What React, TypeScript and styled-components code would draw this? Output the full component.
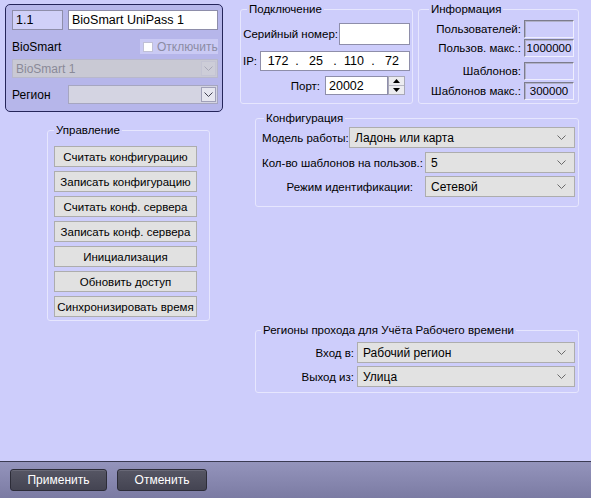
import React from 'react';
import styled, { createGlobalStyle } from 'styled-components';

const FS = 11.5;

const Global = createGlobalStyle`
  html, body { margin: 0; padding: 0; }
  body {
    font-family: "Liberation Sans", Arial, sans-serif;
    font-size: ${FS}px;
    color: #000;
  }
`;

const Window = styled.div`
  width: 591px;
  height: 498px;
  display: flex;
  flex-direction: column;
  background: #cdcdfb;
  overflow: hidden;
`;

const Main = styled.div`
  height: 461px;
  display: flex;
  flex-direction: column;
`;

const TopRow = styled.div`
  display: flex;
  align-items: flex-start;
  height: 112px;
`;

const DevicePanel = styled.div`
  margin: 4px 0 0 5px;
  width: 218px;
  height: 108px;
  box-sizing: border-box;
  border: 1px solid #25255a;
  border-radius: 5px;
  background: #b6b6ea;
  padding: 5px 4px 0 6px;
  display: flex;
  flex-direction: column;
`;

const PanelRow = styled.div<{ $mt: number; $h: number }>`
  margin-top: ${p => p.$mt}px;
  height: ${p => p.$h}px;
  display: flex;
  align-items: center;
`;

const Spacer = styled.span<{ $w: number }>`
  width: ${p => p.$w}px;
  flex: none;
`;

const TextInput = styled.div<{ $w?: number; $bg?: string }>`
  ${p => (p.$w ? `width: ${p.$w}px;` : 'flex: 1;')}
  height: 100%;
  box-sizing: border-box;
  border: 1px solid #8e8eaa;
  background: ${p => p.$bg ?? '#fff'};
  display: flex;
  align-items: center;
  padding: 0 3px;
  font-size: 12.5px;
  white-space: nowrap;
`;

const PanelLabel = styled.span<{ $w?: number }>`
  ${p => (p.$w ? `width: ${p.$w}px;` : 'flex: 1;')}
  font-size: 12px;
  color: #000;
`;

const DisableBox = styled.label`
  width: 78px;
  height: 15px;
  background: #cacaf4;
  display: flex;
  align-items: center;
  gap: 4px;
  padding-left: 3px;
  box-sizing: border-box;
  color: #8c8ca4;
  font-size: 12px;
`;

const CheckSquare = styled.span`
  width: 10px;
  height: 10px;
  background: #fff;
  border: 1px solid #c0c0d6;
  box-sizing: border-box;
`;

const PanelSelect = styled.div<{ $disabled?: boolean }>`
  flex: 1;
  height: 100%;
  box-sizing: border-box;
  border: 1px solid ${p => (p.$disabled ? '#b8b8cc' : '#a6a6c0')};
  background: ${p => (p.$disabled ? '#c9c9d4' : '#d4d4e2')};
  color: ${p => (p.$disabled ? '#8a8a98' : '#000')};
  display: flex;
  align-items: center;
  padding-left: 3px;
  font-size: 12px;
`;

const SelectText = styled.span`
  flex: 1;
  white-space: nowrap;
`;

const ArrowBox = styled.span<{ $disabled?: boolean }>`
  width: 15px;
  height: 15px;
  margin-right: 1px;
  box-sizing: border-box;
  border: 1px solid ${p => (p.$disabled ? '#c4c4d4' : '#a0a0b8')};
  background: ${p => (p.$disabled ? '#cdcdd8' : '#e6e6ef')};
  display: flex;
  align-items: center;
  justify-content: center;
  color: ${p => (p.$disabled ? '#a8a8b8' : '#404050')};
`;

const Group = styled.fieldset<{ $w: number; $ml?: number; $mt?: number }>`
  margin: ${p => p.$mt ?? 0}px 0 0 ${p => p.$ml ?? 0}px;
  width: ${p => p.$w}px;
  box-sizing: border-box;
  border: 1px solid #e6e6fe;
  border-radius: 3px;
  padding: 0;
  min-width: 0;
`;

const Legend = styled.legend<{ $ml?: number }>`
  margin-left: ${p => p.$ml ?? 6}px;
  padding: 0 2px;
  line-height: 13px;
  font-size: ${FS}px;
`;

const GroupBody = styled.div<{ $pad: string }>`
  display: flex;
  flex-direction: column;
  padding: ${p => p.$pad};
`;

const FormRow = styled.div<{ $mt?: number; $h: number; $end?: boolean }>`
  margin-top: ${p => p.$mt ?? 0}px;
  height: ${p => p.$h}px;
  display: flex;
  align-items: center;
  justify-content: ${p => (p.$end ? 'flex-end' : 'flex-start')};
`;

const Label = styled.span<{ $mr?: number; $grow?: boolean; $right?: boolean }>`
  margin-right: ${p => p.$mr ?? 0}px;
  white-space: nowrap;
  ${p => (p.$grow ? 'flex: 1;' : '')}
  text-align: ${p => (p.$right ? 'right' : 'left')};
`;

const IpBox = styled.div`
  flex: 1;
  margin-left: 3px;
  height: 100%;
  box-sizing: border-box;
  border: 1px solid #8e8eaa;
  background: #fff;
  display: flex;
  align-items: center;
  font-size: 12.5px;
`;

const Octet = styled.span`
  flex: 1;
  text-align: center;
`;

const Dot = styled.span`
  width: 4px;
  text-align: center;
`;

const Spin = styled.div`
  width: 17px;
  height: 100%;
  box-sizing: border-box;
  border: 1px solid #a8a8b8;
  background: #ececf0;
  display: flex;
  flex-direction: column;
  margin-right: 5px;
`;

const SpinHalf = styled.span<{ $top?: boolean }>`
  flex: 1;
  display: flex;
  align-items: center;
  justify-content: center;
  ${p => (p.$top ? 'border-bottom: 1px solid #b8b8c4;' : '')}
`;

const InfoField = styled.div`
  width: 50px;
  height: 100%;
  box-sizing: border-box;
  border-top: 1px solid #7c7c8c;
  border-left: 1px solid #7c7c8c;
  border-right: 1px solid #eeeefe;
  border-bottom: 1px solid #eeeefe;
  box-shadow: inset 1px 1px 0 #b0b0c8;
  background: #cdcdfb;
  display: flex;
  align-items: center;
  justify-content: center;
  font-size: ${FS}px;
`;

const BottomRow = styled.div`
  display: flex;
  align-items: flex-start;
`;

const RightCol = styled.div`
  display: flex;
  flex-direction: column;
  margin-left: 45px;
`;

const CmdButton = styled.button`
  width: 143px;
  height: 21px;
  margin: 0;
  padding: 0;
  box-sizing: border-box;
  border: 1px solid #adadad;
  background: #e1e1e1;
  font-family: inherit;
  font-size: ${FS}px;
  color: #000;
  white-space: nowrap;
  & + & {
    margin-top: 4px;
  }
`;

const ComboBox = styled.div<{ $w: number }>`
  width: ${p => p.$w}px;
  height: 100%;
  box-sizing: border-box;
  border: 1px solid #adadad;
  background: #e2e2e2;
  display: flex;
  align-items: center;
  padding: 0 8px 0 5px;
  color: #000;
  font-size: 12px;
`;

const ComboArrow = styled.span`
  color: #6a6a6a;
  display: flex;
`;

const Footer = styled.div`
  height: 37px;
  box-sizing: border-box;
  border-top: 1px solid #3a3a52;
  background: linear-gradient(#9494bc, #7b7ba3);
  display: flex;
  align-items: flex-start;
  padding: 7px 0 0 10px;
  gap: 10px;
`;

const FooterButton = styled.button<{ $w: number }>`
  width: ${p => p.$w}px;
  height: 22px;
  margin: 0;
  padding: 0;
  box-sizing: border-box;
  border: 1px solid #2c2c38;
  border-radius: 3px;
  background: linear-gradient(#565664, #444452);
  color: #fff;
  font-family: inherit;
  font-size: 12px;
  box-shadow: inset 0 1px 0 #686876;
`;

const Chevron = () => (
  <svg width="9" height="5" viewBox="0 0 9 5">
    <path d="M0.5 0.5 L4.5 4.5 L8.5 0.5" fill="none" stroke="currentColor" strokeWidth="1" />
  </svg>
);

const Triangle = ({ up }: { up?: boolean }) => (
  <svg width="7" height="4" viewBox="0 0 7 4">
    <path d={up ? 'M0 4 L3.5 0 L7 4 Z' : 'M0 0 L3.5 4 L7 0 Z'} fill="#000" />
  </svg>
);

const Combo = ({ w, text }: { w: number; text: string }) => (
  <ComboBox $w={w}>
    <SelectText>{text}</SelectText>
    <ComboArrow>
      <Chevron />
    </ComboArrow>
  </ComboBox>
);

const infoRows: { label: string; value: string; mt: number }[] = [
  { label: 'Пользователей:', value: '', mt: 4 },
  { label: 'Пользов. макс.:', value: '1000000', mt: 1 },
  { label: 'Шаблонов:', value: '', mt: 5 },
  { label: 'Шаблонов макс.:', value: '300000', mt: 2 },
];

const commands = [
  'Считать конфигурацию',
  'Записать конфигурацию',
  'Считать конф. сервера',
  'Записать конф. сервера',
  'Инициализация',
  'Обновить доступ',
  'Синхронизировать время',
];

export default function App() {
  return (
    <>
      <Global />
      <Window>
        <Main>
          <TopRow>
            <DevicePanel>
              <PanelRow $mt={0} $h={20}>
                <TextInput $w={51} $bg="#d0d0f8">1.1</TextInput>
                <Spacer $w={5} />
                <TextInput>BioSmart UniPass 1</TextInput>
              </PanelRow>
              <PanelRow $mt={8} $h={17}>
                <PanelLabel>BioSmart</PanelLabel>
                <DisableBox>
                  <CheckSquare />
                  Отключить
                </DisableBox>
              </PanelRow>
              <PanelRow $mt={4} $h={19}>
                <PanelSelect $disabled>
                  <SelectText>BioSmart 1</SelectText>
                  <ArrowBox $disabled>
                    <Chevron />
                  </ArrowBox>
                </PanelSelect>
              </PanelRow>
              <PanelRow $mt={7} $h={19}>
                <PanelLabel $w={56}>Регион</PanelLabel>
                <PanelSelect>
                  <SelectText />
                  <ArrowBox>
                    <Chevron />
                  </ArrowBox>
                </PanelSelect>
              </PanelRow>
            </DevicePanel>

            <Group $w={173} $ml={17} $mt={3}>
              <Legend>Подключение</Legend>
              <GroupBody $pad="7px 2px 8px 2px">
                <FormRow $h={22} $end>
                  <Label $mr={1}>Серийный номер:</Label>
                  <TextInput $w={71} />
                </FormRow>
                <FormRow $mt={6} $h={20}>
                  <Label>IP:</Label>
                  <IpBox>
                    <Octet>172</Octet>
                    <Dot>.</Dot>
                    <Octet>25</Octet>
                    <Dot>.</Dot>
                    <Octet>110</Octet>
                    <Dot>.</Dot>
                    <Octet>72</Octet>
                  </IpBox>
                </FormRow>
                <FormRow $mt={5} $h={19} $end>
                  <Label $mr={5}>Порт:</Label>
                  <TextInput $w={63}>20002</TextInput>
                  <Spin>
                    <SpinHalf $top>
                      <Triangle up />
                    </SpinHalf>
                    <SpinHalf>
                      <Triangle />
                    </SpinHalf>
                  </Spin>
                </FormRow>
              </GroupBody>
            </Group>

            <Group $w={161} $ml={5} $mt={3}>
              <Legend $ml={10}>Информация</Legend>
              <GroupBody $pad="0 4px 3px 0">
                {infoRows.map(r => (
                  <FormRow key={r.label} $mt={r.mt} $h={18} $end>
                    <Label $mr={3}>{r.label}</Label>
                    <InfoField>{r.value}</InfoField>
                  </FormRow>
                ))}
              </GroupBody>
            </Group>
          </TopRow>

          <BottomRow>
            <Group $w={163} $ml={47} $mt={12}>
              <Legend $ml={6}>Управление</Legend>
              <GroupBody $pad="9px 0 3px 6px">
                {commands.map(c => (
                  <CmdButton key={c}>{c}</CmdButton>
                ))}
              </GroupBody>
            </Group>

            <RightCol>
              <Group $w={324}>
                <Legend $ml={8}>Конфигурация</Legend>
                <GroupBody $pad="2px 3px 9px 6px">
                  <FormRow $h={21}>
                    <Label $grow>Модель работы:</Label>
                    <Combo w={226} text="Ладонь или карта" />
                  </FormRow>
                  <FormRow $mt={4} $h={21}>
                    <Label $grow>Кол-во шаблонов на пользов.:</Label>
                    <Combo w={150} text="5" />
                  </FormRow>
                  <FormRow $mt={3} $h={21}>
                    <Label $grow $right $mr={12}>Режим идентификации:</Label>
                    <Combo w={150} text="Сетевой" />
                  </FormRow>
                </GroupBody>
              </Group>

              <Group $w={324} $mt={117}>
                <Legend $ml={5}>Регионы прохода для Учёта Рабочего времени</Legend>
                <GroupBody $pad="5px 3px 5px 6px">
                  <FormRow $h={21}>
                    <Label $grow $right $mr={3}>Вход в:</Label>
                    <Combo w={218} text="Рабочий регион" />
                  </FormRow>
                  <FormRow $mt={3} $h={21}>
                    <Label $grow $right $mr={3}>Выход из:</Label>
                    <Combo w={218} text="Улица" />
                  </FormRow>
                </GroupBody>
              </Group>
            </RightCol>
          </BottomRow>
        </Main>
        <Footer>
          <FooterButton $w={97}>Применить</FooterButton>
          <FooterButton $w={90}>Отменить</FooterButton>
        </Footer>
      </Window>
    </>
  );
}
